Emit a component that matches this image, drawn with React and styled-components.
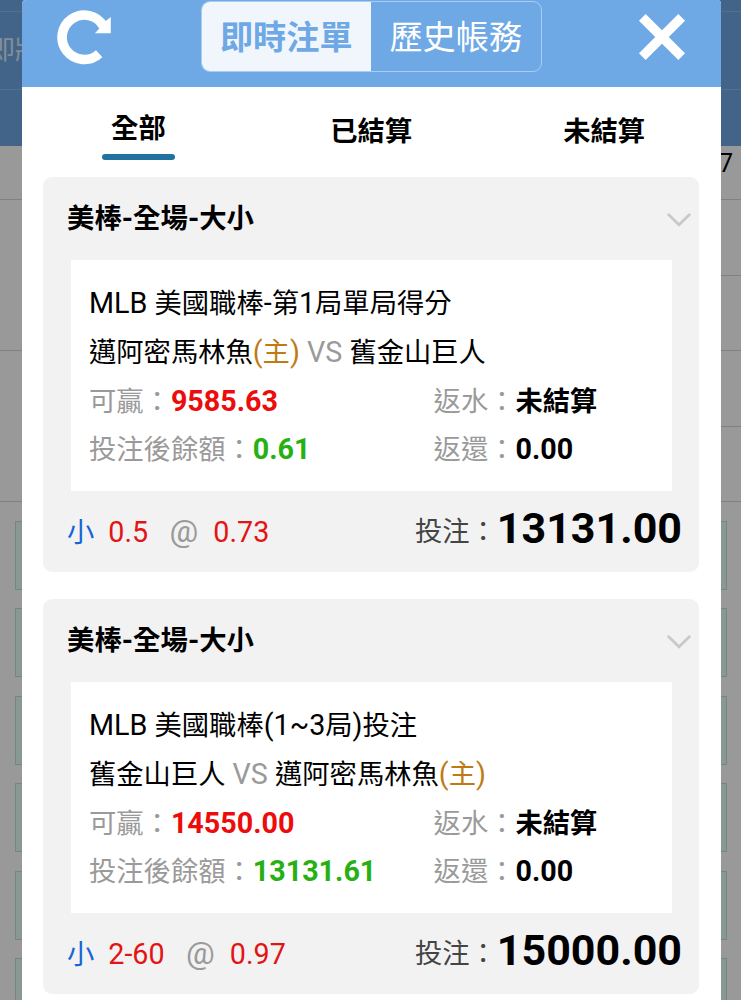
import React from "react"
import styled, { createGlobalStyle } from "styled-components"

const bets = [
  {
    id: 1,
    league: "美棒-全場-大小",
    event: "MLB 美國職棒-第1局單局得分",
    home: { name: "邁阿密馬林魚", host: true },
    away: { name: "舊金山巨人", host: false },
    win: "9585.63",
    balance: "0.61",
    rebate: "未結算",
    refund: "0.00",
    pick: "小",
    line: "0.5",
    odds: "0.73",
    stake: "13131.00",
  },
  {
    id: 2,
    league: "美棒-全場-大小",
    event: "MLB 美國職棒(1~3局)投注",
    home: { name: "舊金山巨人", host: false },
    away: { name: "邁阿密馬林魚", host: true },
    win: "14550.00",
    balance: "13131.61",
    rebate: "未結算",
    refund: "0.00",
    pick: "小",
    line: "2-60",
    odds: "0.97",
    stake: "15000.00",
  },
]

// latin runs are set a little larger than the chinese around them
const Mixed = ({ text }) =>
  text
    .split(/([\x20-\x7e]+)/)
    .map((part, i) => (i % 2 ? <Latin key={i}>{part}</Latin> : part))

const Team = ({ name, host }) => (
  <>
    {name}
    {host && (
      <Host>
        <Mixed text="(主)" />
      </Host>
    )}
  </>
)

const RefreshIcon = () => (
  <svg width="56" height="56" viewBox="0 0 56 56" fill="none">
    <path d="M46.4 17A22.2 22.2 0 1 0 42.2 44.7" stroke="#fff" strokeWidth="9.6" />
    <path d="M53.8 8V24.3H37.8L41 21L45 16L48 12.6Z" fill="#fff" />
  </svg>
)

const CloseIcon = () => (
  <svg width="48" height="48" viewBox="0 0 48 48" fill="none">
    <path d="M4.3 4.3L43.7 43.7M43.7 4.3L4.3 43.7" stroke="#fff" strokeWidth="9.5" />
  </svg>
)

const ChevronIcon = () => (
  <svg width="24" height="14" viewBox="0 0 24 14" fill="none">
    <path d="M1.7 1.8L12 11.8L22.3 1.8" stroke="#c9c9c9" strokeWidth="2.8" strokeLinecap="round" />
  </svg>
)

const BetCard = ({ bet }) => (
  <Card>
    <CardHeader>
      <CardTitle>
        <Mixed text={bet.league} />
      </CardTitle>
      <Toggle aria-label="toggle">
        <ChevronIcon />
      </Toggle>
    </CardHeader>
    <Detail>
      <Line>
        <Mixed text={bet.event} />
      </Line>
      <Line>
        <Team {...bet.home} />
        <Versus> VS </Versus>
        <Team {...bet.away} />
      </Line>
      <Pair>
        <Label>可贏：</Label>
        <Value color="#ec0c0c">{bet.win}</Value>
        <Label>返水：</Label>
        <Value $small>{bet.rebate}</Value>
      </Pair>
      <Pair>
        <Label>投注後餘額：</Label>
        <Value color="#27b012">{bet.balance}</Value>
        <Label>返還：</Label>
        <Value>{bet.refund}</Value>
      </Pair>
    </Detail>
    <CardFooter>
      <Selection>
        <Pick>{bet.pick}</Pick>
        <Odds>{bet.line}</Odds>
        <At>@</At>
        <Odds>{bet.odds}</Odds>
      </Selection>
      <StakeLabel>投注：</StakeLabel>
      <Stake>{bet.stake}</Stake>
    </CardFooter>
  </Card>
)

const Backdrop = () => (
  <Page>
    <PageNav>
      <NavStrip />
      <NavItem>即將</NavItem>
      <NavStrip $tall />
    </PageNav>
    <DateBar>7</DateBar>
    <OddsTable>
      <OddsColumn>
        <OddsCell $tall />
        <OddsCell $tall />
      </OddsColumn>
      <OddsColumn>
        <OddsCell />
        <OddsCell />
        <OddsCell />
        <OddsCell />
      </OddsColumn>
    </OddsTable>
    <Markets>
      {[1, 2, 3, 4, 5, 6].map(n => (
        <Market key={n} />
      ))}
    </Markets>
  </Page>
)

const App = () => (
  <Screen>
    <GlobalStyle />
    <Backdrop />
    <Overlay>
      <Modal>
        <Header>
          <IconButton aria-label="refresh">
            <RefreshIcon />
          </IconButton>
          <Switch>
            <SwitchItem $active>即時注單</SwitchItem>
            <SwitchItem>歷史帳務</SwitchItem>
          </Switch>
          <IconButton aria-label="close">
            <CloseIcon />
          </IconButton>
        </Header>
        <Tabs>
          <Tab $active>全部</Tab>
          <Tab>已結算</Tab>
          <Tab>未結算</Tab>
        </Tabs>
        <BetList>
          {bets.map(bet => (
            <BetCard key={bet.id} bet={bet} />
          ))}
        </BetList>
      </Modal>
    </Overlay>
  </Screen>
)

export default App

const GlobalStyle = createGlobalStyle`
  * {
    box-sizing: border-box;
  }
  body {
    margin: 0;
    font-family: Roboto, "Noto Sans CJK TC", sans-serif;
    font-size: 27.3px;
    color: #000;
  }
  button {
    font: inherit;
    border: 0;
    padding: 0;
    background: none;
  }
`

const Screen = styled.div`
  position: relative;
  height: 1000px;
  overflow: hidden;
`

const Page = styled.div`
  height: 100%;
  background: #fff;
`

const PageNav = styled.div`
  height: 145.5px;
  background: #6ea7e3;
`

const NavStrip = styled.div`
  height: ${props => (props.$tall ? "56px" : "11px")};
`

const NavItem = styled.div`
  height: 78.5px;
  margin-left: -11px;
  border-top: 1px solid #8dbbea;
  border-bottom: 1px solid #8dbbea;
  color: #dcebfa;
  font-size: 26px;
  line-height: 76px;
`

const DateBar = styled.div`
  height: 54.5px;
  padding-right: 8px;
  border-bottom: 1.5px solid #d6d6d6;
  font-size: 25px;
  line-height: 36px;
  text-align: right;
`

const OddsTable = styled.div`
  display: grid;
  grid-template-columns: 1fr 1fr;
  height: 302px;
`

const OddsColumn = styled.div`
  display: flex;
  flex-direction: column;
`

const OddsCell = styled.div`
  height: ${props => (props.$tall ? "151px" : "75.5px")};
  border-bottom: 1.5px solid #d6d6d6;
`

const Markets = styled.div`
  display: flex;
  flex-direction: column;
  gap: 18.4px;
  padding: 19px 14px 0 15px;
`

const Market = styled.div`
  height: 69px;
  border: 1.5px solid #bce2d8;
  background: #e5fdf7;
`

const Overlay = styled.div`
  position: absolute;
  inset: 0;
  padding: 0 20.5px 0 22px;
  background: rgba(0, 0, 0, 0.4);
`

const Modal = styled.div`
  height: 100%;
  overflow: hidden;
  border-radius: 4px 4px 0 0;
  background: #fff;
`

const Header = styled.div`
  display: flex;
  justify-content: space-between;
  align-items: flex-start;
  height: 87px;
  padding: 1px 34px 0 35px;
  background: #6ea8e5;
`

const IconButton = styled.button`
  display: flex;
  align-items: center;
  width: 56px;
  height: 71px;

  &:last-child {
    width: 48px;
  }
`

const Switch = styled.div`
  display: flex;
  width: 341px;
  height: 71px;
  margin-right: 9.4px;
  overflow: hidden;
  border: 1.5px solid #a9cdf3;
  border-radius: 9px;
`

const SwitchItem = styled.button`
  flex: 1;
  padding-bottom: 4px;
  font-size: 33.2px;
  font-weight: ${props => (props.$active ? 700 : 400)};
  color: ${props => (props.$active ? "#6ea8e5" : "#fff")};
  background: ${props => (props.$active ? "#f1f6fd" : "transparent")};
`

const Tabs = styled.div`
  display: grid;
  grid-template-columns: repeat(3, 1fr);
  height: 90px;
`

const Tab = styled.button`
  display: flex;
  flex-direction: column;
  align-items: center;
  padding-top: ${props => (props.$active ? "22px" : "25px")};
  font-weight: 700;
  line-height: 40px;

  &::after {
    content: "";
    width: 73px;
    height: 6px;
    margin-top: 5px;
    border-radius: 3px;
    background: ${props => (props.$active ? "#2272a0" : "transparent")};
  }
`

const BetList = styled.div`
  display: flex;
  flex-direction: column;
  gap: 27px;
  padding: 0 21.5px 0 21px;
`

const Card = styled.div`
  height: 395px;
  border-radius: 9px;
  background: #f2f2f2;
`

const CardHeader = styled.div`
  display: flex;
  justify-content: space-between;
  align-items: center;
  height: 83px;
  padding: 0 8px 0 24px;
`

const CardTitle = styled.h3`
  margin: 0;
  font-size: 27.4px;
  font-weight: 700;
  line-height: 40px;
`

const Toggle = styled.button`
  display: flex;
  padding-top: 2px;
`

const Detail = styled.div`
  height: 230.5px;
  margin: 0 27px 0 28px;
  padding: 19.2px 18px 0;
  background: #fff;
`

const Line = styled.div`
  height: 48.7px;
  line-height: 48.7px;
  white-space: nowrap;
`

const Pair = styled.div`
  display: flex;
  align-items: baseline;
  height: 48.7px;
  line-height: 48.7px;

  & > :nth-child(2) {
    flex: 1;
  }
  & > :last-child {
    width: 138.5px;
  }
`

const Latin = styled.span`
  font-size: 28.7px;
`

const Host = styled.span`
  color: #c07a14;
`

const Versus = styled(Latin)`
  color: #9a9a9a;
`

const Label = styled.span`
  color: #9a9a9a;
`

const Value = styled.span`
  font-size: ${props => (props.$small ? "27.3px" : "28.7px")};
  font-weight: 700;
  color: ${props => props.color || "#000"};
`

const CardFooter = styled.div`
  display: flex;
  align-items: flex-start;
  height: 81.5px;
  padding: 7.5px 17px 0 24px;
  line-height: 69px;
`

const Selection = styled.div`
  display: flex;
  align-items: baseline;
  height: 69px;
`

const Pick = styled.span`
  margin-right: 14px;
  color: #1565d8;
`

const Odds = styled.span`
  font-size: 28.7px;
  color: #e31414;
`

const At = styled.span`
  margin: 0 15px 0 21.5px;
  font-size: 32px;
  line-height: 60px;
  color: #9a9a9a;
`

const StakeLabel = styled.span`
  margin-left: auto;
  color: #444;
`

const Stake = styled.span`
  font-size: 43px;
  font-weight: 700;
  line-height: 60px;
`
